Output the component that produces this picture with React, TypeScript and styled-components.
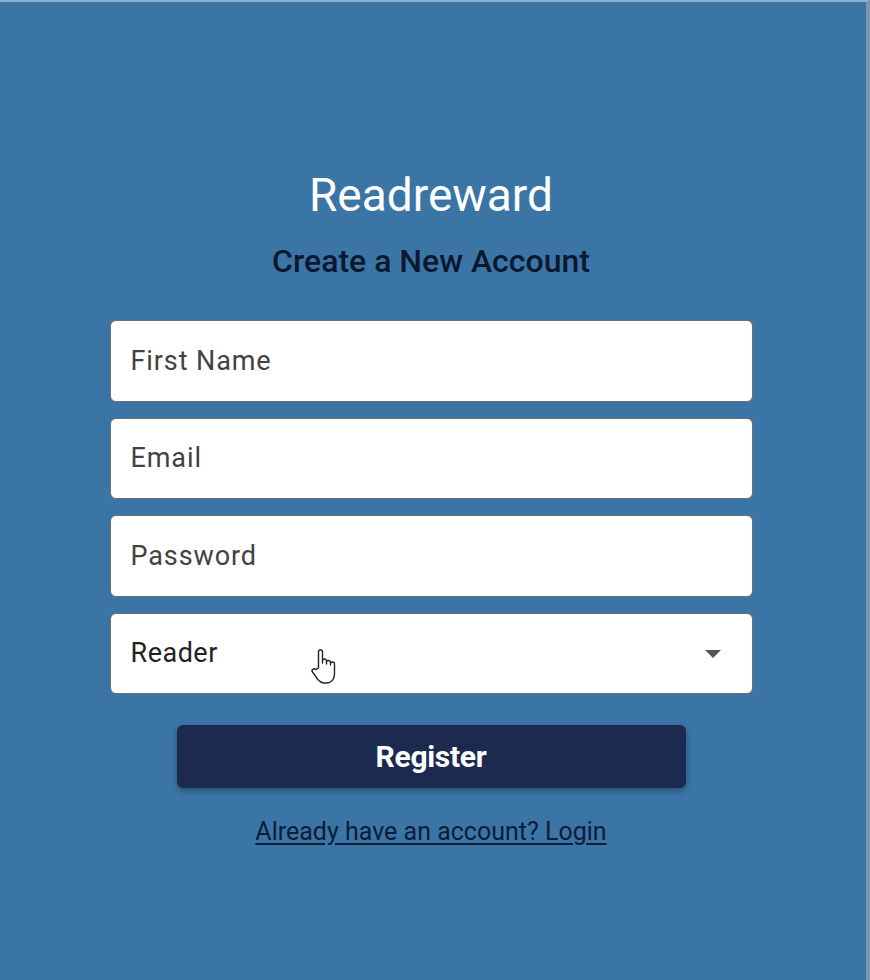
import React from 'react';
import styled, { createGlobalStyle } from 'styled-components';

const GlobalStyle = createGlobalStyle`
	html, body {
		margin: 0;
		padding: 0;
		background: #3a75a6;
	}
	* {
		box-sizing: border-box;
	}
`;

function HandCursor() {
	return (
		<svg width="28" height="40" viewBox="0 0 28 40">
			<path
				d="M8.5 21 V5 a2 2 0 0 1 4 0 V16 V14 a2 2 0 0 1 4 0 V17 V15.5 a2 2 0 0 1 4 0 V18 V17 a2 2 0 0 1 4 0 V27 c0 5 -3 9 -8 9 h-2 c-3 0 -5 -1.5 -7 -4 L2.5 25 a2 2 0 0 1 3.2 -2.4 Z"
				fill="#fff"
				stroke="#222"
				strokeWidth="1.4"
				strokeLinejoin="round"
			/>
		</svg>
	);
}

function App() {
	return (
		<>
			<GlobalStyle />
			<Page>
				<Form>
					<Brand>Readreward</Brand>
					<Heading>Create a New Account</Heading>
					<Fields>
						<Field placeholder="First Name" />
						<Field placeholder="Email" />
						<Field placeholder="Password" type="password" />
						<SelectWrap>
							<Select defaultValue="reader">
								<option value="reader">Reader</option>
								<option value="author">Author</option>
							</Select>
							<Arrow viewBox="0 0 16 8" width="16" height="8">
								<path d="M0 0 L16 0 L8 8 Z" fill="#555" />
							</Arrow>
							<Pointer>
								<HandCursor />
							</Pointer>
						</SelectWrap>
					</Fields>
					<RegisterBtn>Register</RegisterBtn>
					<LoginLink href="#">Already have an account? Login</LoginLink>
				</Form>
			</Page>
		</>
	);
}

const Page = styled.div`
	min-height: 980px;
	padding-right: 4px;
	border-top: 2px solid #8fb3d4;
	border-right: 4px solid #7d95ac;
	background: #3a75a6;
	display: flex;
	justify-content: center;
	font-family: Roboto, 'Liberation Sans', sans-serif;
`;

const Form = styled.div`
	width: 643px;
	padding-top: 166px;
	display: flex;
	flex-direction: column;
	align-items: center;
`;

const Brand = styled.h1`
	margin: 0;
	color: #ffffff;
	font-size: 46px;
	font-weight: 400;
	line-height: 54px;
`;

const Heading = styled.h2`
	margin: 20px 0 0 0;
	color: #0b1830;
	font-size: 32px;
	font-weight: 500;
	line-height: 38px;
`;

const Fields = styled.div`
	width: 100%;
	margin-top: 40px;
	display: flex;
	flex-direction: column;
	gap: 16px;
`;

const Field = styled.input`
	width: 100%;
	height: 81.5px;
	padding: 0 20px;
	border: 1px solid #6e6e6e;
	border-radius: 6px;
	background: #ffffff;
	color: #222;
	font-family: Roboto, 'Liberation Sans', sans-serif;
	font-size: 27px;
	letter-spacing: 0.9px;
	outline: none;

	&::placeholder {
		color: #424242;
	}
`;

const SelectWrap = styled.div`
	position: relative;
`;

const Select = styled.select`
	width: 100%;
	height: 81.5px;
	padding: 0 20px;
	border: 1px solid #6e6e6e;
	border-radius: 6px;
	background: #ffffff;
	color: #222;
	font-family: Roboto, 'Liberation Sans', sans-serif;
	font-size: 27px;
	letter-spacing: 0.5px;
	appearance: none;
	outline: none;
`;

const Arrow = styled.svg`
	position: absolute;
	right: 32px;
	top: 37px;
	pointer-events: none;
`;

const Pointer = styled.div`
	position: absolute;
	left: 200px;
	top: 34px;
	pointer-events: none;
`;

const RegisterBtn = styled.button`
	width: 509px;
	height: 63px;
	margin-top: 31px;
	border: none;
	border-radius: 6px;
	background: #1c2a4f;
	color: #ffffff;
	font-family: Roboto, 'Liberation Sans', sans-serif;
	font-size: 30px;
	font-weight: 700;
	letter-spacing: -0.3px;
	box-shadow: 0 3px 6px rgba(0, 0, 0, 0.3);
	cursor: pointer;
`;

const LoginLink = styled.a`
	margin-top: 30px;
	color: #0e1c35;
	font-size: 25px;
	line-height: 28px;
	text-decoration: underline;
	text-underline-offset: 3px;
`;

export default App;
